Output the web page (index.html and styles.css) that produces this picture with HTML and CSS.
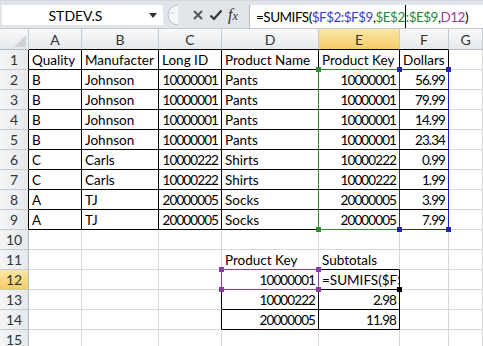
FILE: index.html
```html
<!DOCTYPE html>
<html>
<head>
<meta charset="utf-8">
<link rel="stylesheet" href="styles.css">
</head>
<body>
<div class="app">
  <div class="fbar">
    <div class="namebox">
      <span class="nb-text">STDEV.S</span>
      <svg class="nb-arrow" width="8" height="5" viewBox="0 0 8 5"><polygon points="0,0 8,0 4,5" fill="#333"/></svg>
    </div>
    <div class="splitter">
      <svg width="16" height="22" viewBox="0 0 16 22"><path d="M15 1 A10 10 0 0 0 15 21" fill="#f4f6f8" stroke="#b7bec6"/><path d="M7 10 l2 -2 l2 2" fill="none" stroke="#c9ced4"/></svg>
    </div>
    <div class="btns">
      <svg class="ic" width="12" height="12" viewBox="0 0 12 12"><path d="M2 2 L10 10 M10 2 L2 10" stroke="#555" stroke-width="2"/></svg>
      <svg class="ic" width="14" height="12" viewBox="0 0 14 12"><path d="M1.5 6.5 L5 10 L12.5 1.5" fill="none" stroke="#333" stroke-width="2.2"/></svg>
      <span class="fx">f<i>x</i></span>
    </div>
    <div class="formula"><span>=SUMIFS(</span><span class="ref-b">$F$2:$F$9</span><span>,</span><span class="ref-g">$E$2</span><span class="caret"></span><span class="ref-g">:$E$9</span><span>,</span><span class="ref-p">D12</span><span>)</span></div>
  </div>

  <div class="grid">
    <div class="h corner"><svg width="12" height="12" viewBox="0 0 12 12"><polygon points="12,0 12,12 0,12" fill="#cfd3d8"/></svg></div>
    <div class="h kb">A</div><div class="h kb">B</div><div class="h kb">C</div><div class="h kb">D</div><div class="h kb sel">E</div><div class="h kb">F</div><div class="h">G</div>

    <div class="r kr">1</div><div class="c k">Quality</div><div class="c k">Manufacter</div><div class="c k">Long ID</div><div class="c k">Product Name</div><div class="c k">Product Key</div><div class="c k">Dollars</div><div class="c"></div>
    <div class="r kr">2</div><div class="c k">B</div><div class="c k">Johnson</div><div class="c k n">10000001</div><div class="c k">Pants</div><div class="c k n">10000001</div><div class="c k n">56.99</div><div class="c"></div>
    <div class="r kr">3</div><div class="c k">B</div><div class="c k">Johnson</div><div class="c k n">10000001</div><div class="c k">Pants</div><div class="c k n">10000001</div><div class="c k n">79.99</div><div class="c"></div>
    <div class="r kr">4</div><div class="c k">B</div><div class="c k">Johnson</div><div class="c k n">10000001</div><div class="c k">Pants</div><div class="c k n">10000001</div><div class="c k n">14.99</div><div class="c"></div>
    <div class="r kr">5</div><div class="c k">B</div><div class="c k">Johnson</div><div class="c k n">10000001</div><div class="c k">Pants</div><div class="c k n">10000001</div><div class="c k n">23.34</div><div class="c"></div>
    <div class="r kr">6</div><div class="c k">C</div><div class="c k">Carls</div><div class="c k n">10000222</div><div class="c k">Shirts</div><div class="c k n">10000222</div><div class="c k n">0.99</div><div class="c"></div>
    <div class="r kr">7</div><div class="c k">C</div><div class="c k">Carls</div><div class="c k n">10000222</div><div class="c k">Shirts</div><div class="c k n">10000222</div><div class="c k n">1.99</div><div class="c"></div>
    <div class="r kr">8</div><div class="c k">A</div><div class="c k">TJ</div><div class="c k n">20000005</div><div class="c k">Socks</div><div class="c k n">20000005</div><div class="c k n">3.99</div><div class="c"></div>
    <div class="r kr">9</div><div class="c k">A</div><div class="c k">TJ</div><div class="c k n">20000005</div><div class="c k">Socks</div><div class="c k n">20000005</div><div class="c k n">7.99</div><div class="c"></div>
    <div class="r">10</div><div class="c"></div><div class="c"></div><div class="c"></div><div class="c"></div><div class="c"></div><div class="c"></div><div class="c"></div>
    <div class="r">11</div><div class="c"></div><div class="c"></div><div class="c"></div><div class="c kb">Product Key</div><div class="c kb">Subtotals</div><div class="c"></div><div class="c"></div>
    <div class="r sel">12</div><div class="c"></div><div class="c"></div><div class="c kr"></div><div class="c k n">10000001</div><div class="c k clip">=SUMIFS($F$2:$F$9,$E$2:$E$9,D12)</div><div class="c"></div><div class="c"></div>
    <div class="r">13</div><div class="c"></div><div class="c"></div><div class="c kr"></div><div class="c k n">10000222</div><div class="c k n">2.98</div><div class="c"></div><div class="c"></div>
    <div class="r">14</div><div class="c"></div><div class="c"></div><div class="c kr"></div><div class="c k n">20000005</div><div class="c k n">11.98</div><div class="c"></div><div class="c"></div>
    <div class="r">15</div><div class="c"></div><div class="c"></div><div class="c"></div><div class="c"></div><div class="c"></div><div class="c"></div><div class="c"></div>
  </div>

  <div class="rng rng-e"></div>
  <div class="rng rng-f"></div>
  <div class="rng rng-d"></div>
  <div class="hd hd-g" style="left:316px;top:67px"></div>
  <div class="hd hd-g" style="left:316px;top:227px"></div>
  <div class="hd hd-b" style="left:397px;top:67px"></div>
  <div class="hd hd-b" style="left:446px;top:67px"></div>
  <div class="hd hd-b" style="left:397px;top:227px"></div>
  <div class="hd hd-b" style="left:446px;top:227px"></div>
  <div class="hd hd-p" style="left:219px;top:267px"></div>
  <div class="hd hd-p" style="left:219px;top:287px"></div>
  <div class="hd hd-p" style="left:316px;top:267px"></div>
  <div class="hd hd-p" style="left:316px;top:287px"></div>
  <div class="hd hd-k" style="left:397px;top:287px"></div>
</div>
</body>
</html>
```

FILE: styles.css
```css
* { box-sizing: border-box; margin: 0; padding: 0; }
body { width: 483px; height: 346px; overflow: hidden; background: #fff; font-family: Lato, "Liberation Sans", sans-serif; color: #000; }
.app { position: relative; width: 483px; height: 346px; overflow: hidden; }

.fbar { display: flex; align-items: flex-start; height: 29px; padding-top: 4px; background: #e1e5ea; border-top: 1px solid #d2d7dd; border-bottom: 1px solid #c3c9d0; }
.namebox { display: flex; align-items: center; width: 161px; height: 20px; margin-left: 2px; background: #fff; }
.nb-text { flex: 1; text-align: center; font-size: 14px; padding-left: 4px; }
.nb-arrow { margin: 0 6px 0 4px; }
.splitter { width: 16px; height: 22px; margin-top: -1px; }
.btns { display: flex; align-items: center; gap: 5px; height: 20px; padding-left: 13px; width: 70px; }
.fx { font-family: "Liberation Serif", serif; font-style: italic; font-size: 16px; color: #333; }
.fx i { font-size: 12px; }
.formula { flex: 1; height: 23px; display: flex; align-items: center; background: #fff; border-left: 1px solid #b8bfc7; padding-left: 6px; font-size: 13.5px; letter-spacing: -0.5px; white-space: nowrap; overflow: hidden; }
.ref-b { color: #3a3fc6; }
.ref-g { color: #2a8a3a; }
.ref-p { color: #9a3a9a; }
.caret { display: inline-block; width: 1px; height: 23px; background: #000; }

.grid { display: grid; grid-template-columns: 29px 53px 77px 63px 97px 81px 49px 1fr; grid-template-rows: 21px repeat(15, 20px); font-size: 13.5px; }
.h { display: flex; align-items: center; justify-content: center; background: linear-gradient(#f8f9fa, #e5e8ec); border-right: 1px solid #c5cad0; border-bottom: 1px solid #b3b9c0; color: #333; padding-top: 1px; font-size: 14px; }
.h.corner { justify-content: flex-end; align-items: flex-end; padding: 0 2px 2px 0; }
.h.sel { background: linear-gradient(#fbe6a6, #f5cd68); }
.r { display: flex; align-items: flex-end; justify-content: center; background: linear-gradient(90deg, #f4f5f7, #e6e9ec); border-right: 1px solid #b3b9c0; border-bottom: 1px solid #c5cad0; color: #333; padding-bottom: 1px; font-size: 14px; }
.r.sel { background: linear-gradient(#fbe6a6, #f5cd68); }
.c { display: flex; align-items: flex-end; border-right: 1px solid #d8d8d8; border-bottom: 1px solid #d8d8d8; padding: 0 2px 1px 3px; white-space: nowrap; overflow: hidden; }
.n { justify-content: flex-end; letter-spacing: -0.9px; padding-right: 3px; }
.k { border-right-color: #000; border-bottom-color: #000; }
.kr { border-right-color: #000; }
.kb { border-bottom-color: #000; }
.clip { overflow: hidden; }

.rng { position: absolute; border: 1px solid; }
.rng-e { left: 318px; top: 69px; width: 82px; height: 161px; border-color: #2f8a2f; }
.rng-f { left: 399px; top: 69px; width: 50px; height: 161px; border-color: #2222b8; }
.rng-d { left: 221px; top: 269px; width: 98px; height: 21px; border-color: #8b3aa6; }
.hd { position: absolute; width: 5px; height: 5px; }
.hd-g { background: #2f8a2f; }
.hd-b { background: #2222b8; }
.hd-p { background: #8b3aa6; }
.hd-k { background: #000; }
```
